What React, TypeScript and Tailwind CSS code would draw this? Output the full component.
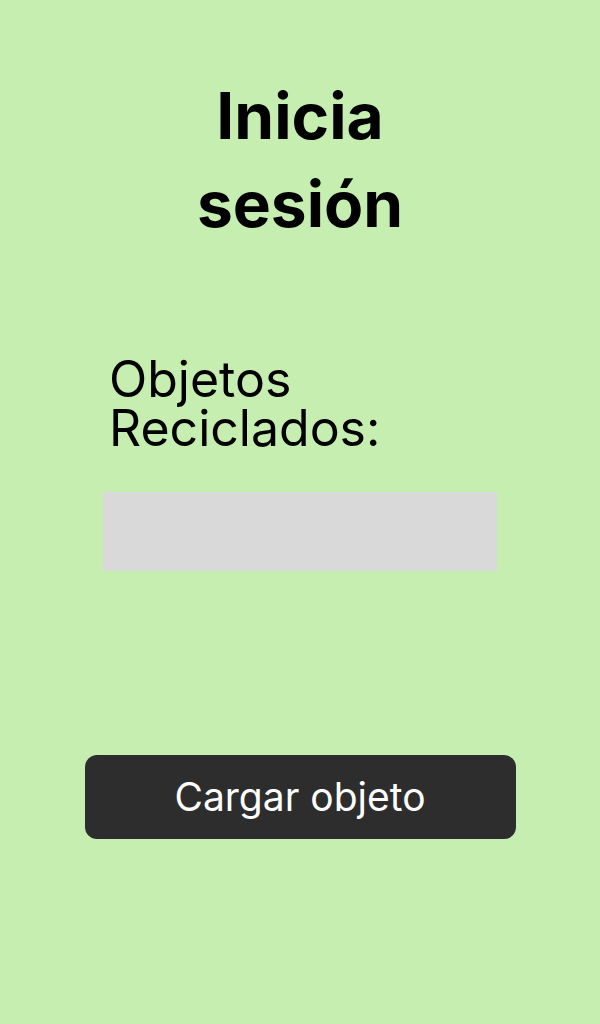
export default function App() {
  return (
    <div className="min-h-[1024px] w-full bg-[#c5eeb0] flex flex-col items-center font-['Inter',sans-serif] text-black">
      <h1 className="mt-[72px] w-[240px] text-center text-[64px] font-bold leading-[88px]">
        Inicia sesión
      </h1>
      <div className="mt-[107px] w-[394px] flex flex-col">
        <p className="ml-[6px] text-[50px] leading-[49px]">
          Objetos
          <br />
          Reciclados:
        </p>
        <div className="mt-[39px] h-[79px] w-full bg-[#d9d9d9]" />
      </div>
      <button className="mt-[184px] h-[84px] w-[431px] rounded-[12px] bg-[#2d2d2d] text-white text-[39px]">
        Cargar objeto
      </button>
    </div>
  );
}
